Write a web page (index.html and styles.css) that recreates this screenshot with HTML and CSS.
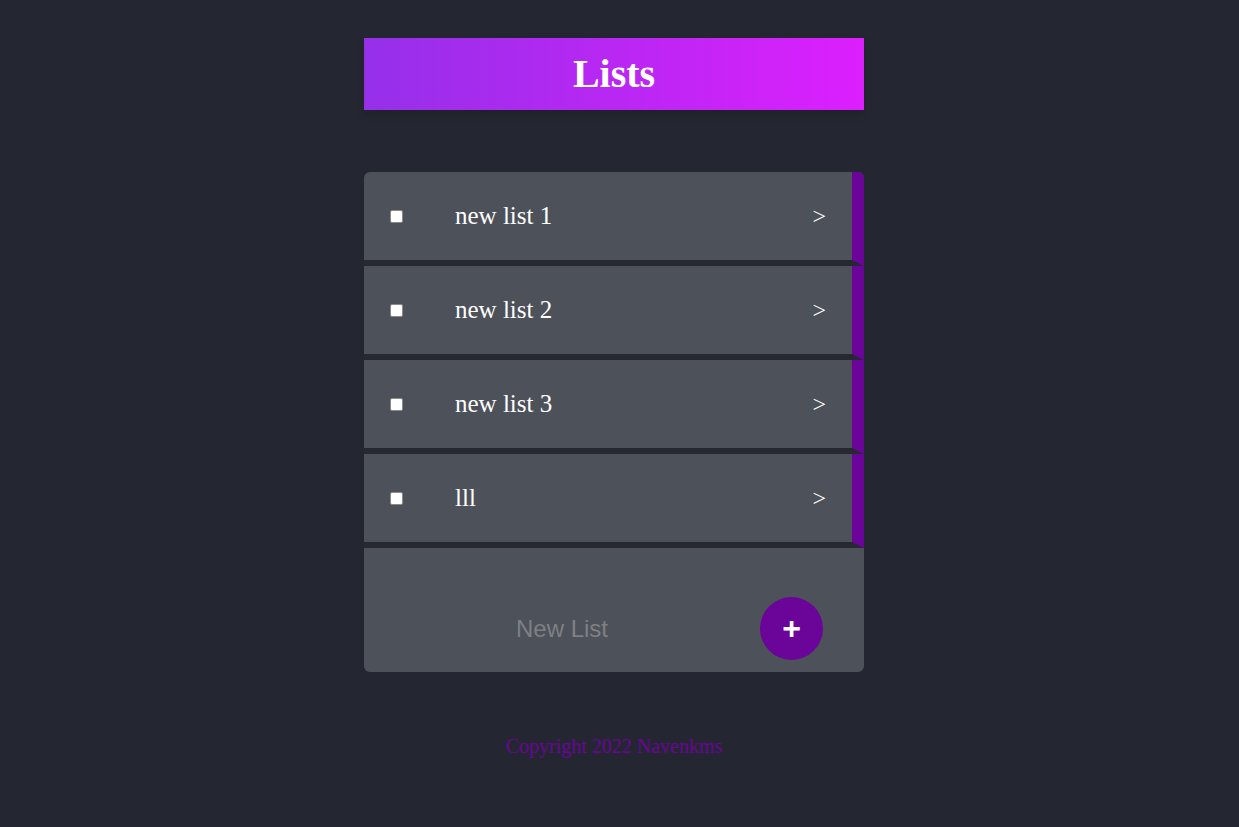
FILE: index.html
```html
<!DOCTYPE html>
<html>
<head>
<meta charset="utf-8">
<link rel="stylesheet" href="styles.css">
</head>
<body>
<div class="page">
  <header class="title-bar"><h1>Lists</h1></header>
  <div class="card">
    <div class="item"><input type="checkbox" class="check"><span class="name">new list 1</span><span class="arrow">&gt;</span></div>
    <div class="item"><input type="checkbox" class="check"><span class="name">new list 2</span><span class="arrow">&gt;</span></div>
    <div class="item"><input type="checkbox" class="check"><span class="name">new list 3</span><span class="arrow">&gt;</span></div>
    <div class="item"><input type="checkbox" class="check"><span class="name">lll</span><span class="arrow">&gt;</span></div>
    <form class="new-form">
      <input type="text" class="new-input" placeholder="New List">
      <button type="button" class="add-btn">+</button>
    </form>
  </div>
  <footer class="footer">Copyright 2022 Navenkms</footer>
</div>
</body>
</html>
```
FILE: styles.css
```css
html, body {
  margin: 0;
  padding: 0;
  background: #242731;
}
body {
  font-family: "Liberation Serif", "Times New Roman", serif;
  padding-right: 11px;
}
.page {
  width: 500px;
  margin: 0 auto;
  padding-top: 38px;
  display: flex;
  flex-direction: column;
}
.title-bar {
  height: 72px;
  display: flex;
  align-items: center;
  justify-content: center;
  background: linear-gradient(to right, #9530e9, #dc1ffd);
  box-shadow: 0 4px 8px rgba(0, 0, 0, 0.15);
}
.title-bar h1 {
  margin: 0;
  font-size: 40px;
  font-weight: bold;
  color: #ffffff;
  line-height: 1;
}
.card {
  margin-top: 62px;
  background: #4d515a;
  border-radius: 6px;
  overflow: hidden;
  display: flex;
  flex-direction: column;
}
.item {
  height: 88px;
  display: flex;
  align-items: center;
  padding-left: 26px;
  padding-right: 26px;
  border-right: 12px solid #6b0499;
  border-bottom: 6px solid #262932;
  color: #ffffff;
  font-size: 25px;
}
.check {
  -webkit-appearance: none;
  appearance: none;
  margin: 0;
  width: 13px;
  height: 13px;
  box-sizing: border-box;
  background: #ffffff;
  border: 1px solid #8a8a8a;
  border-radius: 2px;
}
.name {
  margin-left: 52px;
  flex: 1;
}
.arrow {
  font-size: 24px;
}
.new-form {
  margin: 0;
  height: 124px;
  box-sizing: border-box;
  padding: 49px 41px 12px 26px;
  display: flex;
  align-items: center;
}
.new-input {
  width: 350px;
  height: 63px;
  box-sizing: border-box;
  margin: 0 20px 0 0;
  padding: 0 6px 0 0;
  border: none;
  outline: none;
  background: transparent;
  text-align: center;
  font-family: "Liberation Sans", Arial, sans-serif;
  font-size: 24px;
  color: #ffffff;
}
.new-input::placeholder {
  color: #7e8085;
}
.add-btn {
  width: 63px;
  height: 63px;
  border-radius: 50%;
  border: none;
  padding: 0;
  background: #6b0499;
  color: #ffffff;
  font-family: "Liberation Sans", Arial, sans-serif;
  font-size: 32px;
  font-weight: bold;
  line-height: 63px;
}
.footer {
  margin-top: 63px;
  text-align: center;
  color: #6b0499;
  font-size: 20px;
}
```
